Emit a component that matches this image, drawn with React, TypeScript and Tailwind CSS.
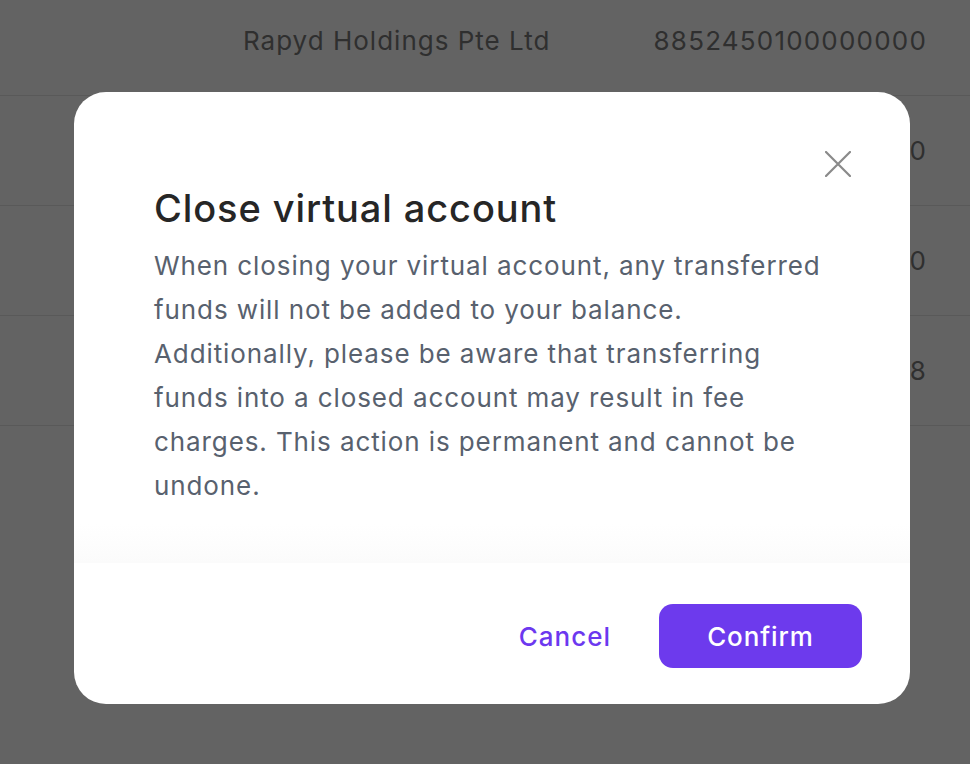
import React from "react";

const rows = [
  { name: "Rapyd Holdings Pte Ltd", number: "8852450100000000", first: true },
  { name: "", number: "8852450100000000" },
  { name: "", number: "8852450100000000" },
  { name: "", number: "8852450100000008" },
];

function BackgroundTable() {
  return (
    <div className="w-full">
      {rows.map((row, i) => (
        <div
          key={i}
          className={
            "flex items-center border-b border-[#595959] " +
            (row.first ? "h-[96px] pb-[14px]" : "h-[110px]")
          }
        >
          <div className="pl-[243px] w-[640px] text-[26px] tracking-[1px] text-[#2f2f2f]">{row.name}</div>
          <div className="flex-1 pr-[43px] text-right text-[26px] tracking-[1.2px] text-[#2f2f2f]">
            {row.number}
          </div>
        </div>
      ))}
    </div>
  );
}

function CloseAccountModal() {
  return (
    <div className="absolute left-[74px] top-[92px] w-[836px] h-[612px] bg-white rounded-[32px] flex flex-col">
      {/* close icon */}
      <button className="absolute top-[59px] right-[59px] text-[#8a8a8a]">
        <svg width="26" height="26" viewBox="0 0 26 26" fill="none">
          <path d="M1 1L25 25M25 1L1 25" stroke="currentColor" strokeWidth="2.2" strokeLinecap="round" />
        </svg>
      </button>

      <div className="px-20 pt-[92px]">
        <h2 className="text-[38px] leading-[48px] font-medium tracking-[0.9px] text-[#262626]">
          Close virtual account
        </h2>
        <p className="mt-3 text-[26px] leading-[44px] tracking-[0.9px] text-[#58616e]">
          When closing your virtual account, any transferred funds will not be added to your balance.
          Additionally, please be aware that transferring funds into a closed account may result in fee
          charges. This action is permanent and cannot be undone.
        </p>
      </div>

      <div className="mt-4 h-[40px] bg-gradient-to-b from-white to-[#fbfbfb]" />

      <div className="flex items-center justify-end gap-12 pt-[41px] pr-12 pb-9">
        <button className="text-[26px] font-medium tracking-[1px] text-[#6c38ef]">Cancel</button>
        <button className="w-[203px] h-16 rounded-[14px] bg-[#6d3aed] text-white text-[26px] font-medium tracking-[0.9px]">
          Confirm
        </button>
      </div>
    </div>
  );
}

export default function App() {
  return (
    <div
      className="relative w-[970px] h-[764px] overflow-hidden bg-[#636363]"
      style={{ fontFamily: "Inter, 'Noto Sans', sans-serif" }}
    >
      <BackgroundTable />
      <CloseAccountModal />
    </div>
  );
}
